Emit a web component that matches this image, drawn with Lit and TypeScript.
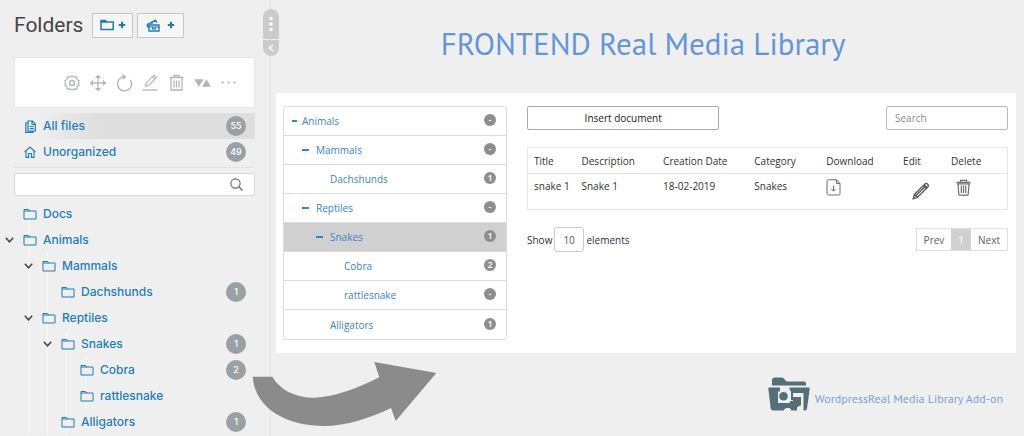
import { LitElement, html, css, svg, nothing } from "lit";
import { customElement, property } from "lit/decorators.js";

interface Folder {
  name: string;
  count?: string;
  selected?: boolean;
  children?: Folder[];
}

const animals: Folder = {
  name: "Animals",
  children: [
    { name: "Mammals", children: [{ name: "Dachshunds", count: "1" }] },
    {
      name: "Reptiles",
      children: [
        {
          name: "Snakes",
          count: "1",
          selected: true,
          children: [{ name: "Cobra", count: "2" }, { name: "rattlesnake" }],
        },
        { name: "Alligators", count: "1" },
      ],
    },
  ],
};

const icon = (w: number, h: number, body: unknown) => html`<svg
  width=${w}
  height=${h}
  viewBox="0 0 ${w} ${h}"
  fill="none"
  stroke="currentColor"
  aria-hidden="true"
>${body}</svg>`;

const icons = {
  folder: icon(14, 12, svg`<path d="M1 1.5h4.5l1 1.5H13v8H1z M1 3h6"/>`),
  folderBold: icon(14, 12, svg`<path stroke-width="1.5" d="M1 1.5h4.5l1 1.5h6.700v7.500H1z M1 3h6"/>`),
  gallery: icon(14, 13, svg`<path stroke-width="1.400" d="M1 5.500L9.500 1.200l1.300 2.600M3 12V6h10v6z M1 5.500l1 3"/><path stroke-width="1.200" d="M3 8h10M6.500 8v1.800h3V8M5 5l2-1.500"/>`),
  plus: icon(8, 8, svg`<path stroke-width="2" d="M4 .8v6.400M.8 4h6.400"/>`),
  gear: icon(16, 16, svg`<path stroke-width="1.300" d="M8 .8l2 1.400 2.500-.2.700 2.400 2 1.500-1 2.100 1 2.100-2 1.500-.7 2.400-2.500-.2-2 1.400-2-1.400-2.500.2-.7-2.400-2-1.500 1-2.100-1-2.100 2-1.500.7-2.400 2.500.2z"/><circle cx="8" cy="8" r="2.500" stroke-width="1.500"/>`),
  move: icon(18, 18, svg`<path stroke-width="1.300" d="M9 2v14M2 9h14"/><path fill="currentColor" stroke="none" d="M9 .5l3 3.500H6zM9 17.500l3-3.500H6zM.5 9L4 6v6zM17.500 9L14 6v6z"/>`),
  reload: icon(17, 18, svg`<path stroke-width="1.400" d="M8.500 2.800a7 7 0 1 0 5.800 3M6.500.6l2.700 2.200-2.400 2.400"/>`),
  pen: icon(16, 17, svg`<path stroke-width="1.200" d="M3.500 12.200l1-3.500L12 1.200l2.500 2.300L7 11.200z M10.500 2.800l2.500 2.400"/><path stroke-width="1.300" d="M.5 16h15"/>`),
  bin: icon(15, 17, svg`<path stroke-width="1.300" d="M.5 3.500h14M5 3.500v-2h5v2M2 3.500v12.500h11V3.500M5 6.500v7M7.500 6.500v7M10 6.500v7"/>`),
  sort: icon(17, 8, svg`<path fill="currentColor" stroke="none" d="M.3.300h9.200L4.900 7.700zM8 7.700h9L12.500.3z"/>`),
  dots: icon(15, 3, svg`<path fill="currentColor" stroke="none" d="M.5.500h2v2h-2zM6.500.5h2v2h-2zM12.500.5h2v2h-2z"/>`),
  file: icon(11, 13, svg`<path stroke-width="1.200" d="M3 1h4.500L10.300 4v7H3z M3 3H.8v9.300H8V11 M7 1v3.500h3M4.700 6.500h4M4.700 8.500h4"/>`),
  home: icon(12, 12, svg`<path stroke-width="1.100" d="M.6 6L6 1l5.400 5M2 5v6.400h2.600V7.500h2.800v3.900H10V5"/>`),
  search: icon(13, 13, svg`<circle cx="5.500" cy="5.500" r="4.600" stroke-width="1.100"/><path stroke-width="1.200" d="M9 9l3.500 3.500"/>`),
  chevron: icon(9, 6, svg`<path stroke-width="1.500" d="M.8.800l3.700 4 3.700-4"/>`),
  download: icon(15, 17, svg`<path d="M1 2.200Q1 .8 2.400.8H10.500L14 4.500v10.200q0 1.300-1.300 1.300H2.400Q1 16 1 14.700z M10.500.8v3.700H14 M7.500 6.500v5.500M5.300 9.800l2.200 2.400 2.200-2.400"/>`),
  pencil: icon(18, 18, svg`<path stroke-width="1.300" d="M1.200 16.800l1.200-4.300L13 2q1.200-1.200 2.600.2t.2 2.800L5.300 15.500z M11.300 3.700l3 3M2.400 12.500l3 3M4 13.500L13 4.800"/><path stroke-width="1.500" d="M12.500 3l2.700 2.700M1.500 16.500l1-1"/>`),
  trash: icon(15, 17, svg`<path stroke-width="1.200" d="M.5 3.300h14M.8 4.800h13.400M4.500 3V1.300h6V3M2 5l.8 10.200q0 1 1 1h7.400q1 0 1-1L13 5M5.300 6.500v7.500M7.500 6.500v7.500M9.700 6.500v7.500"/>`),
};

const reset = css`
  * { box-sizing: border-box; }
  ul { list-style: none; margin: 0; padding: 0; }
  a { color: inherit; text-decoration: none; }
  button { font: inherit; color: inherit; background: none; border: 0; padding: 0; margin: 0; cursor: pointer; }
  input, select { font: inherit; color: inherit; margin: 0; }
  svg { display: block; flex: none; }
`;

@customElement("folder-sidebar")
export class FolderSidebar extends LitElement {
  static styles = [
    reset,
    css`
      :host { display: block; position: relative; border-right: 1px solid #e2e2e2; font: 500 12px/26px Inter, Roboto, sans-serif; color: #1e7db8; }
      .top { display: flex; align-items: center; padding: 12px 14px 0; height: 38px; }
      h2 { margin: 0 9px 0 0; font-family: Roboto, sans-serif; font-size: 21px; font-weight: 400; color: #444; line-height: 26px; }
      .new { display: flex; align-items: center; justify-content: center; gap: 4px; height: 25px; width: 41px; border: 1px solid #c8c8c8; background: #f6f6f6; margin-right: 4px; }
      .new.wide { width: 47px; gap: 7px; }
      .tools { display: flex; align-items: center; justify-content: flex-end; gap: 8px; height: 51px; margin: 19px 15px 5px 14px; padding-right: 17px; background: #fff; border: 1px solid #e6e6e6; color: #b4b7ba; }
      .tools button { width: 18px; display: grid; place-items: center; }
      .fixed { margin: 0 15px 5px 14px; border-bottom: 1px solid #e2e2e2; padding-bottom: 2px; }
      .row { display: flex; align-items: center; height: 26px; }
      .fixed .row { padding: 0 9px; }
      .active { background: linear-gradient(90deg, transparent 10%, #dedede 35%); }
      .slot { width: 14px; margin-right: 6px; display: grid; place-items: center; }
      .label { flex: 1; }
      .badge { width: 20px; height: 20px; border-radius: 50%; background: #9ba0a4; color: #fff; font-size: 9px; line-height: 20px; text-align: center; }
      .search { display: flex; align-items: center; height: 23px; margin: 0 15px 5px 14px; padding-right: 11px; background: #fff; border: 1px solid #d8d8d8; border-radius: 2px; color: #666; }
      .search input { flex: 1; min-width: 0; border: 0; outline: 0; background: none; }
      .tree { background: linear-gradient(#f8f8f8, #f8f8f8) 28px 0 / 1px 100% no-repeat; }
      .tree .tree { margin-left: 19px; }
      .tree .row { padding: 0 24px 0 5px; }
      .toggle { width: 9px; height: 16px; margin-right: 9px; color: #444; display: grid; place-items: center; }
      .tree svg { background: #efefef; }
      .handle { position: absolute; top: 9px; right: -9px; width: 16px; display: grid; gap: 1px; color: #fff; }
      .handle button { display: grid; place-items: center; background: #cbcbcb; height: 30px; border-radius: 8px 8px 0 0; }
      .handle button + button { height: 16px; border-radius: 0 0 8px 8px; }
    `,
  ];

  private row(f: Folder): unknown {
    return html`<li>
      <div class="row">
        ${f.children
          ? html`<button class="toggle" aria-label="Collapse ${f.name}">${icons.chevron}</button>`
          : html`<span class="toggle"></span>`}
        <span class="slot">${icons.folder}</span>
        <a class="label" href="#">${f.name}</a>
        ${f.count ? html`<span class="badge">${f.count}</span>` : nothing}
      </div>
      ${f.children ? html`<ul class="tree">${f.children.map((c) => this.row(c))}</ul>` : nothing}
    </li>`;
  }

  render() {
    const tools: [string, unknown][] = [
      ["Settings", icons.gear], ["Move", icons.move], ["Reload", icons.reload], ["Rename", icons.pen],
      ["Delete", icons.bin], ["Sort", icons.sort], ["More", icons.dots],
    ];
    return html`
      <div class="top">
        <h2>Folders</h2>
        <button class="new" aria-label="New folder">${icons.folderBold}${icons.plus}</button>
        <button class="new wide" aria-label="New gallery">${icons.gallery}${icons.plus}</button>
      </div>
      <div class="tools">
        ${tools.map(([name, glyph]) => html`<button aria-label=${name}>${glyph}</button>`)}
      </div>
      <div class="fixed">
        <div class="row active"><span class="slot">${icons.file}</span><a class="label" href="#">All files</a><span class="badge">55</span></div>
        <div class="row"><span class="slot">${icons.home}</span><a class="label" href="#">Unorganized</a><span class="badge">49</span></div>
      </div>
      <label class="search"><input type="text" aria-label="Search folders" />${icons.search}</label>
      <ul class="tree">${[{ name: "Docs" }, animals].map((f) => this.row(f))}</ul>
      <div class="handle">
        <button aria-label="Resize">${icon(4, 16, svg`<path fill="currentColor" stroke="none" d="M.5 1h3v3h-3zM.5 6.500h3v3h-3zM.5 12h3v3h-3z"/>`)}</button>
        <button aria-label="Collapse sidebar">${icon(6, 8, svg`<path stroke-width="1.300" d="M5 1L1.200 4 5 7"/>`)}</button>
      </div>
    `;
  }
}

@customElement("media-tree")
export class MediaTree extends LitElement {
  static styles = [
    reset,
    css`
      :host { display: block; border: 1px solid #dcdcdc; border-radius: 3px; overflow: hidden; color: #3a83d0; }
      .row { display: flex; align-items: center; height: 29px; padding-right: 10px; }
      .line { border-bottom: 1px solid #dcdcdc; }
      .selected { background: #d0d0d0; }
      .toggle { width: 14px; height: 12px; display: flex; align-items: center; }
      .dash { width: 7px; height: 2px; background: #2f86d6; }
      .root .toggle { width: 10px; }
      .root .dash { width: 5px; }
      .label { flex: 1; }
      .badge { min-width: 12px; height: 12px; border-radius: 6px; background: #8e8e8e; color: #fff; font-size: 9px; font-weight: 600; line-height: 12px; text-align: center; margin-bottom: 2px; }
    `,
  ];

  private rows(f: Folder, level = 0): { f: Folder; level: number }[] {
    return [{ f, level }, ...(f.children ?? []).flatMap((c) => this.rows(c, level + 1))];
  }

  render() {
    const rows = this.rows(animals);
    return html`<ul>
      ${rows.map(
        ({ f, level }, i) => html`<li
          class="row ${i < rows.length - 1 ? "line" : ""} ${f.selected ? "selected" : ""} ${level ? "" : "root"}"
          style="padding-left:${level ? 4 + level * 14 : 8}px"
        >
          ${f.children
            ? html`<button class="toggle" aria-label="Collapse ${f.name}"><span class="dash"></span></button>`
            : html`<span class="toggle"></span>`}
          <a class="label" href="#">${f.name}</a><span class="badge">${f.count ?? "-"}</span>
        </li>`
      )}
    </ul>`;
  }
}

@customElement("document-list")
export class DocumentList extends LitElement {
  static styles = [
    reset,
    css`
      :host { display: block; color: #333; }
      .bar { display: flex; align-items: center; justify-content: space-between; }
      .insert { width: 40%; height: 24px; border: 1px solid #aaa; border-radius: 2px; color: #222; }
      .find { width: 122px; height: 24px; border: 1px solid #bbb; border-radius: 2px; padding: 0 8px; }
      .find::placeholder { color: #8a8a8a; opacity: 1; }
      table { width: 100%; margin: 17px 0; border-collapse: collapse; table-layout: fixed; border: 1px solid #e6e6e6; }
      th, td { text-align: left; font-weight: 400; padding: 0 0 0 6px; white-space: nowrap; }
      th { height: 26px; border-bottom: 1px solid #e6e6e6; }
      td { height: 36px; vertical-align: top; padding-top: 5px; line-height: 14px; }
      .act { color: #707070; }
      .edit { padding: 3px 0 0 9px; color: #555; }
      .del { padding-left: 5px; }
      .c1 { width: 10%; }
      .c2 { width: 17%; }
      .c3 { width: 19%; }
      .c4 { width: 15%; }
      .c5 { width: 16%; }
      .c6 { width: 10%; }
      .c7 { width: 13%; }
      .size { display: flex; align-items: center; gap: 2px; }
      .size select { appearance: none; width: 30px; height: 25px; border: 1px solid #ccc; border-radius: 3px; background: #fff; padding: 0 8px; color: #555; }
      .pager { display: flex; border: 1px solid #e0e0e0; height: 23px; color: #5a5f66; }
      .pager button { padding: 0 7px; }
      .pager .on { background: #d0d0d0; color: #fff; }
    `,
  ];

  render() {
    return html`
      <div class="bar">
        <button class="insert">Insert document</button>
        <input class="find" type="search" placeholder="Search" aria-label="Search" />
      </div>
      <table>
        <colgroup>${[1, 2, 3, 4, 5, 6, 7].map((n) => html`<col class="c${n}" />`)}</colgroup>
        <thead>
          <tr>${["Title", "Description", "Creation Date", "Category", "Download", "Edit", "Delete"].map((t) => html`<th scope="col">${t}</th>`)}</tr>
        </thead>
        <tbody>
          <tr>
            <td>snake 1</td>
            <td>Snake 1</td>
            <td>18-02-2019</td>
            <td>Snakes</td>
            <td><button class="act" aria-label="Download">${icons.download}</button></td>
            <td><button class="act edit" aria-label="Edit">${icons.pencil}</button></td>
            <td><button class="act del" aria-label="Delete">${icons.trash}</button></td>
          </tr>
        </tbody>
      </table>
      <div class="bar">
        <label class="size">Show <select><option>10</option></select> elements</label>
        <nav class="pager" aria-label="Pages"><button>Prev</button><button class="on">1</button><button>Next</button></nav>
      </div>
    `;
  }
}

@customElement("app-root")
export class AppRoot extends LitElement {
  @property() heading = "FRONTEND Real Media Library";

  static styles = [
    reset,
    css`
      :host { display: flex; position: relative; min-height: 100vh; background: #efefef; overflow: hidden; font: 10px/14px "Open Sans", sans-serif; }
      folder-sidebar { flex: 0 0 271px; }
      main { flex: 1; min-width: 0; padding: 24px 8px 0 5px; }
      h1 { margin: 0 0 29px; padding-right: 6px; font: 400 31px/40px "PT Sans", "Noto Sans", sans-serif; color: #6495d8; text-align: center; }
      .panel { display: grid; grid-template-columns: 224px 1fr; gap: 20px; background: #fff; padding: 13px 8px 13px 7px; align-items: start; }
      .addon { display: flex; align-items: center; justify-content: flex-end; gap: 5px; margin-top: 24px; padding-right: 13px; font: 12px/16px "PT Sans", "Noto Sans", sans-serif; color: #7a9fdc; }
      .addon a { padding-top: 8px; }
      .addon svg { color: #546e7a; }
      .arrow { position: absolute; left: 252px; top: 361px; color: #8b8b8b; pointer-events: none; }
    `,
  ];

  render() {
    return html`
      <folder-sidebar></folder-sidebar>
      <main>
        <h1>${this.heading}</h1>
        <section class="panel"><media-tree></media-tree><document-list></document-list></section>
        <footer class="addon">
          ${icon(42, 35, svg`<g fill="currentColor" stroke="none">
            <path d="M4 8.500V3.500Q4 .5 7 .5h6.500q2 0 3 1.700l2 2.300H36q2 0 2 2v2z"/>
            <path d="M1.500 10.500H40.500q1.300 0 1.200 1.300L39 31.500q-.3 2-2 2H5q-2 0-2.300-2L.3 11.800q-.2-1.300 1.200-1.300z"/>
            <g fill="#efefef">
              <path d="M12 10h9.500v2.500L23 14.500v8.500h2V28H10V14.500h2z"/>
              <path d="M25 16h10.500v18H33V20h-8z"/>
              <path d="M16 34v-1.500l2.500-1.500H23v3zM29 34v-3.500l3-2h2V34z"/>
            </g>
            <circle cx="15.500" cy="19.300" r="4.300"/>
            <path d="M10 26h12v2H10zM22 24h7v5.500h-3.500V32H22z"/>
          </g>`)}
          <a href="#">WordpressReal Media Library Add-on</a>
        </footer>
      </main>
      <div class="arrow">
        ${icon(186, 66, svg`<path fill="currentColor" stroke="none" d="M.7 15.700H20.300C28 29 44 37 63 36.700C82 36 104 28 127.300 16.300L122.300 1l62 11L143.700 60l-4.700-13C118 57 95 65 71.300 65C37 65 3 49 .7 15.700z"/>`)}
      </div>
    `;
  }
}
